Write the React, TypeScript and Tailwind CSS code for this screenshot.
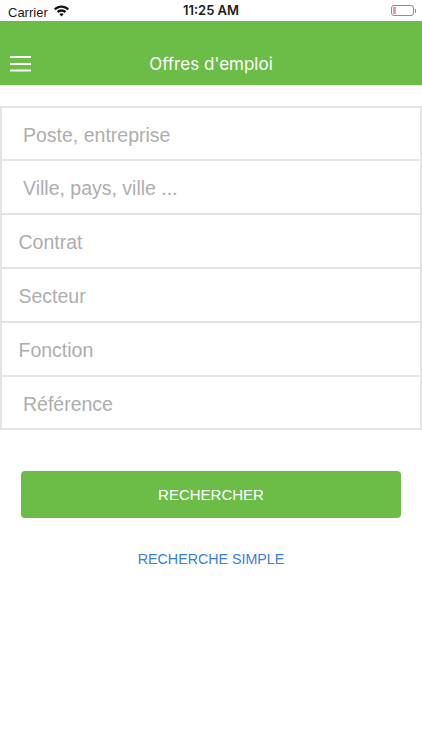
function Row({ label, pl, h }: { label: string; pl: string; h: string }) {
  return (
    <div className={`flex items-center border-b-2 border-[#e4e4e4] pt-[4px] text-[19.500px] text-[#aeaeae] ${pl} ${h}`}>
      {label}
    </div>
  );
}

export default function App() {
  return (
    <div className="h-[750px] w-[422px] overflow-hidden bg-white font-['Liberation_Sans',sans-serif]">
      <div className="relative flex h-[21px] items-center justify-center text-[#1c1c1c]">
        <div className="absolute left-[8px] top-[3px] flex items-center gap-[6px] text-[13px]">
          <span>Carrier</span>
          <svg width="15" height="12" viewBox="0 0 16 12" fill="#111" className="-mt-[3px]">
            <path d="M8 0C5 0 2.300 1.200 0 3.300l1.700 1.800C3.400 3.500 5.600 2.500 8 2.500s4.600 1 6.300 2.600L16 3.300C13.700 1.200 11 0 8 0z" />
            <path d="M8 4.200c-1.900 0-3.600.8-4.900 2l1.700 1.800C5.700 7.200 6.800 6.700 8 6.700s2.300.5 3.200 1.300l1.700-1.800c-1.300-1.200-3-2-4.900-2z" />
            <path d="M8 8.300c-.9 0-1.700.4-2.300 1L8 11.800l2.300-2.500c-.6-.6-1.400-1-2.300-1z" />
          </svg>
        </div>
        <span className="font-['Inter',sans-serif] text-[13px] font-semibold">11:25 AM</span>
        <div className="absolute left-[391px] top-[5px] flex items-center">
          <div className="h-[11px] w-[23px] rounded-[3px] border border-[#8e8e8e] p-[1px]">
            <div className="h-full w-[3px] bg-[#ee9aa0]" />
          </div>
          <div className="ml-[1px] h-[4px] w-[1px] bg-[#8e8e8e]" />
        </div>
      </div>
      <div className="relative flex h-[64px] items-end justify-center bg-[#6cbd47] pb-[10px]">
        <svg className="absolute left-[10px] top-[35px]" width="22" height="17" viewBox="0 0 22 17" fill="#fff">
          <rect x="0" y="0" width="21" height="2" />
          <rect x="0" y="7" width="21" height="2" />
          <rect x="0" y="13.500" width="21" height="2" />
        </svg>
        <span className="font-['Inter',sans-serif] text-[17px] leading-[22px] text-white">Offres d'emploi</span>
      </div>
      <div className="mt-[21px] border-x-2 border-t-2 border-[#e4e4e4]">
        <Row label="Poste, entreprise" pl="pl-[21px]" h="h-[53px]" />
        <Row label="Ville, pays, ville ..." pl="pl-[21px]" h="h-[54px]" />
        <Row label="Contrat" pl="pl-[16.500px]" h="h-[54px]" />
        <Row label="Secteur" pl="pl-[16.500px]" h="h-[54px]" />
        <Row label="Fonction" pl="pl-[16.500px]" h="h-[54px]" />
        <Row label="Référence" pl="pl-[21px]" h="h-[53px]" />
      </div>
      <div className="mx-[21px] mt-[41px] flex h-[47px] items-center justify-center rounded-[4px] bg-[#6cbd47] pt-[1px] text-[15px] text-white">
        RECHERCHER
      </div>
      <div className="mt-[32px] text-center text-[14.250px] leading-[18px] text-[#3b7de0]">RECHERCHE SIMPLE</div>
    </div>
  );
}
